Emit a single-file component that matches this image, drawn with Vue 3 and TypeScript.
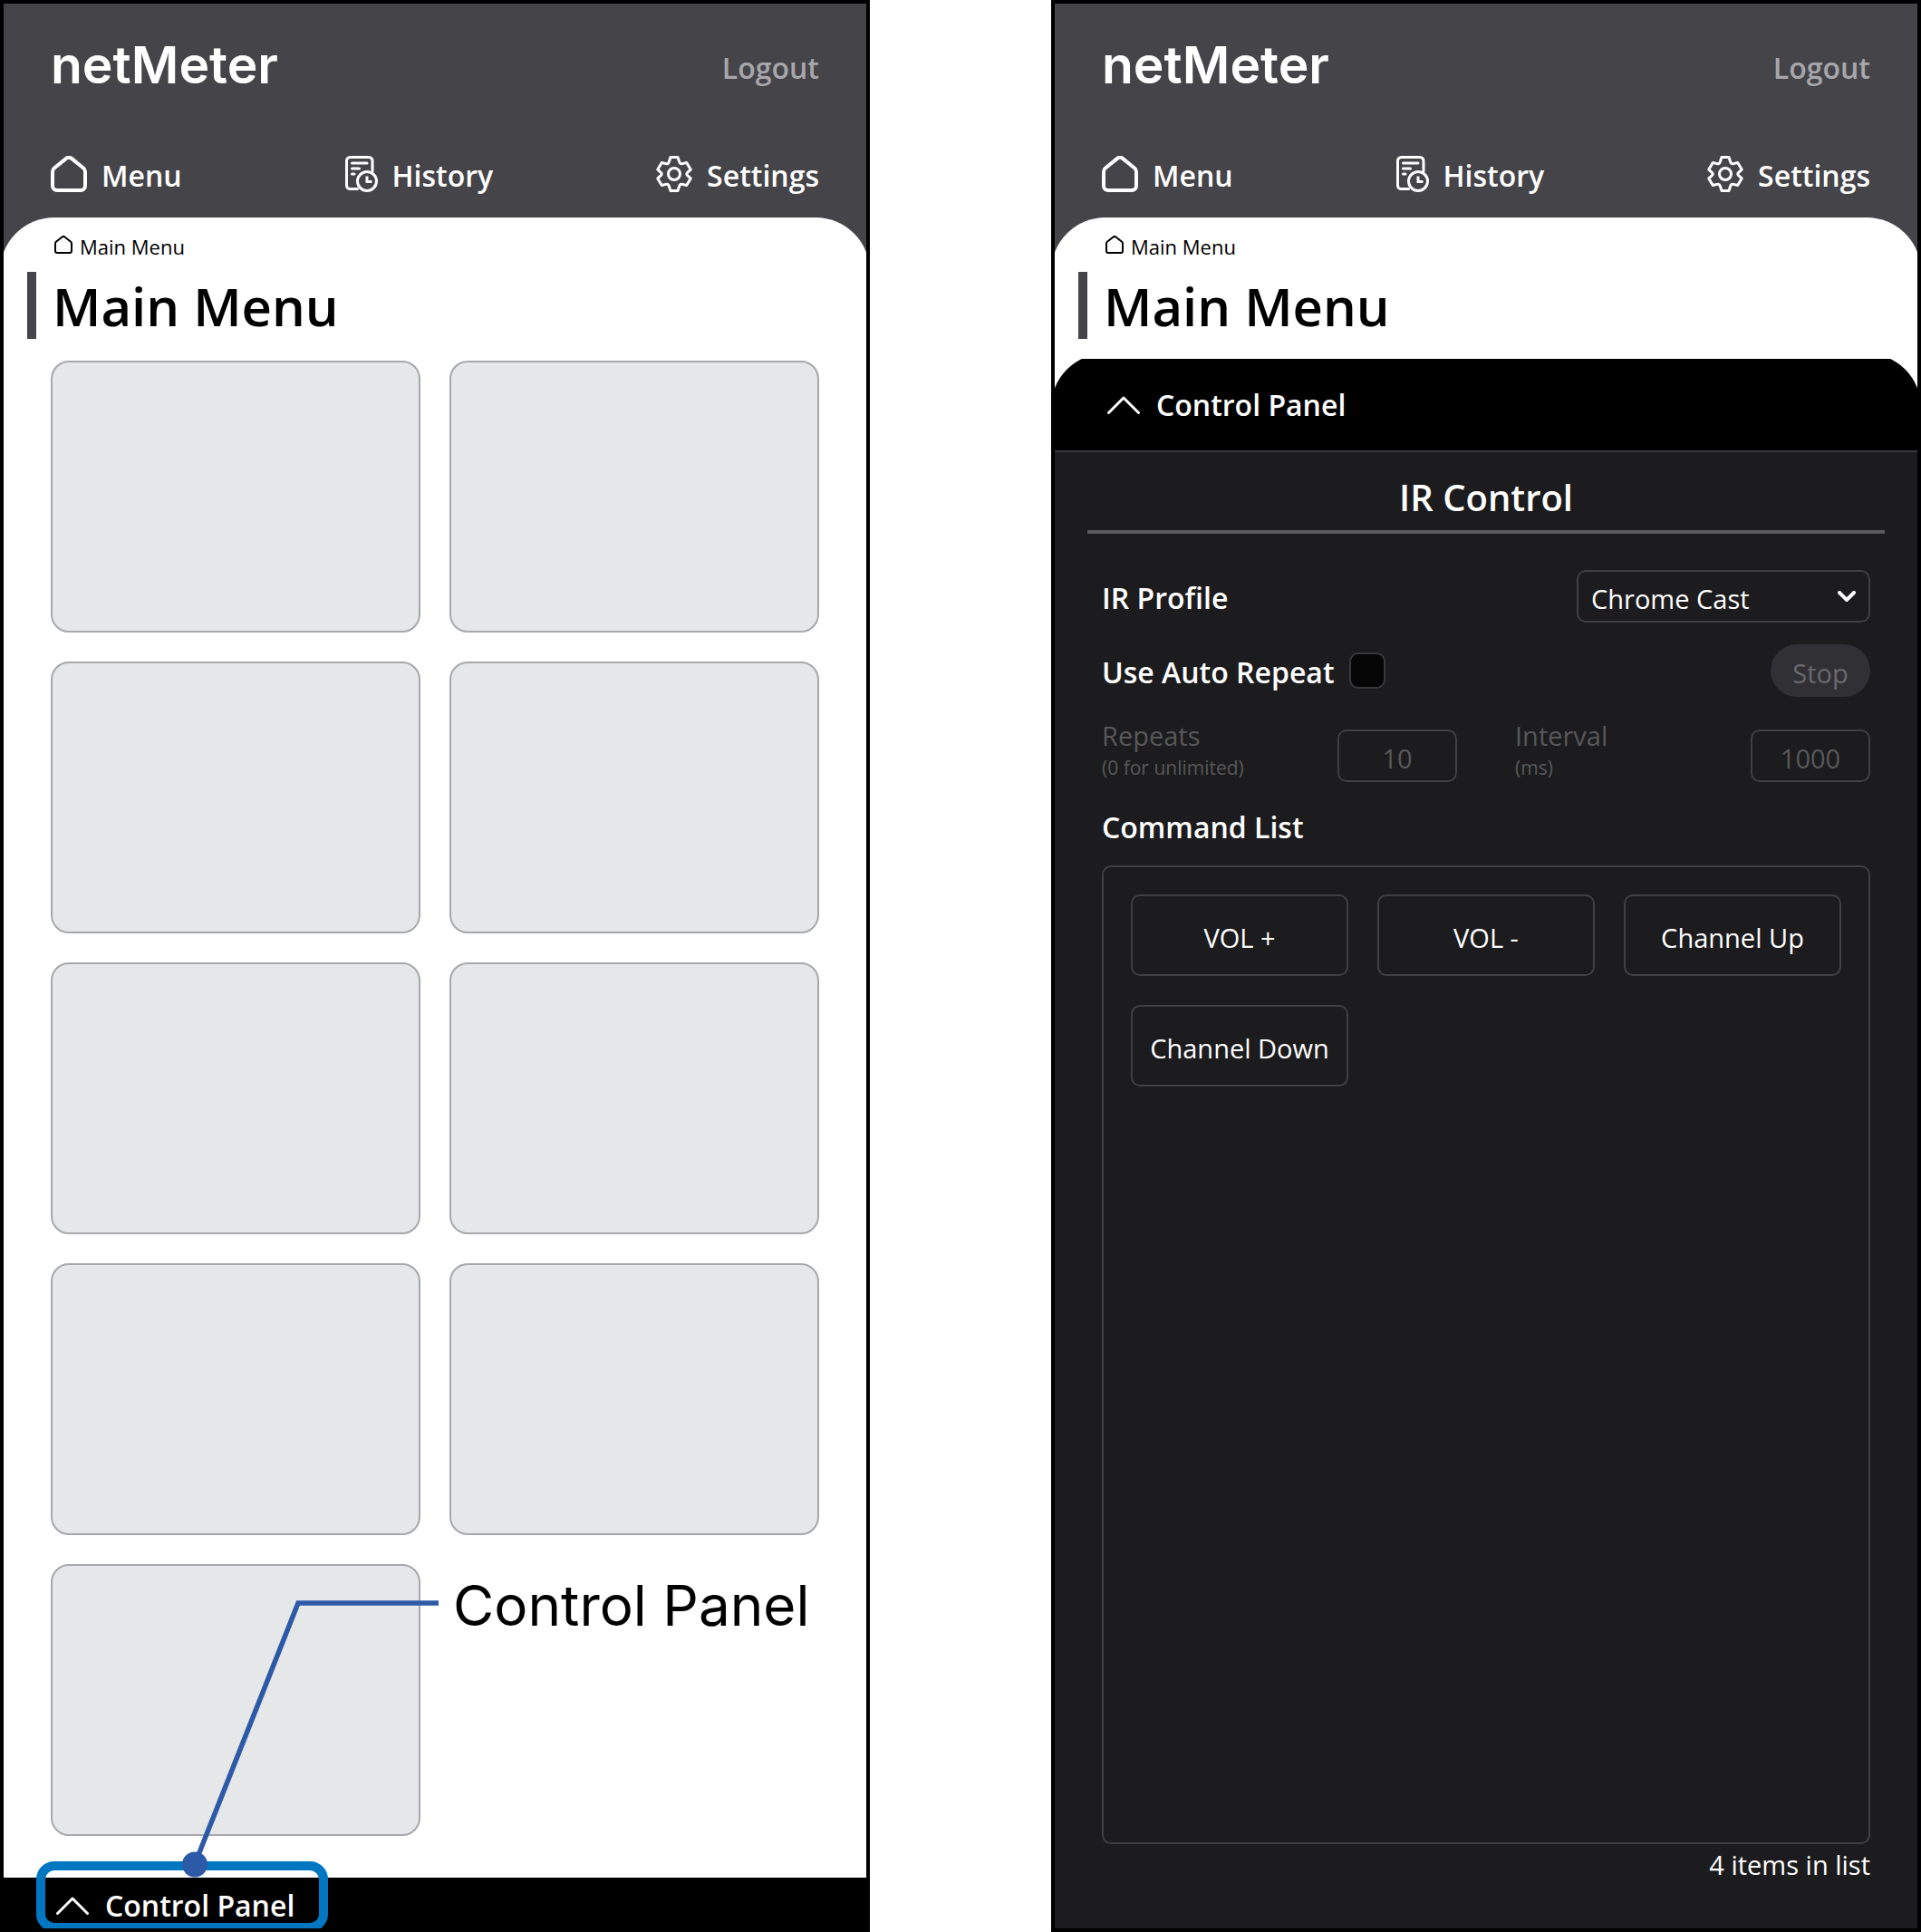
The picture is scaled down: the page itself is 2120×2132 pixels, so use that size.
<script setup lang="ts">
import { ref } from 'vue'

interface Command {
  id: number
  label: string
}

const cardCount = 9
const profiles: string[] = ['Chrome Cast']
const profile = ref<string>('Chrome Cast')
const autoRepeat = ref<boolean>(false)
const repeats = ref<string>('10')
const interval = ref<string>('1000')
const commands: Command[] = [
  { id: 1, label: 'VOL +' },
  { id: 2, label: 'VOL -' },
  { id: 3, label: 'Channel Up' },
  { id: 4, label: 'Channel Down' },
]
const screens = ['menu', 'control'] as const
</script>

<template>
  <div class="stage">
    <section v-for="screen in screens" :key="screen" class="phone">
      <header class="header">
        <div class="brand-row">
          <span class="brand">netMeter</span>
          <a class="logout" href="#">Logout</a>
        </div>
        <nav class="nav">
          <a class="nav-link" href="#">
            <svg width="40" height="40" viewBox="0 0 40 40" fill="none" stroke="currentColor" stroke-width="4" stroke-linejoin="round">
              <path d="M2 17.500c0-1.600.7-3 1.900-4L17 2.900c1.800-1.400 4.200-1.400 6 0l13.100 10.600c1.200 1 1.900 2.400 1.900 4V33c0 2.800-2.200 5-5 5H7c-2.800 0-5-2.200-5-5z" />
            </svg>
            Menu
          </a>
          <a class="nav-link" href="#">
            <svg width="36" height="40" viewBox="0 0 36 40" fill="none" stroke="currentColor" stroke-width="3" stroke-linecap="round">
              <path d="M13.500 36.500H5.500a4 4 0 0 1-4-4v-27a4 4 0 0 1 4-4h20.500a4 4 0 0 1 4 4V17" />
              <path d="M7.500 8h16.500M7.500 14h8M7.500 20h2.500" />
              <circle cx="24" cy="28" r="10.500" />
              <path d="M24 24v4.500h4" stroke-linecap="square" />
            </svg>
            History
          </a>
          <a class="nav-link" href="#">
            <svg width="40" height="40" viewBox="0 0 40 40" fill="none" stroke="currentColor" stroke-width="3" stroke-linejoin="round">
              <path d="M16 1.500h8l1.700 5.200c.5 1.400 2 2.300 3.500 1.900l4.500-1.100 4.500 7.600-3.500 3.200c-1.200 1-1.200 2.400 0 3.400l3.500 3.200-4.500 7.600-4.500-1.100c-1.500-.4-3 .5-3.500 1.900L24 38.500h-8l-1.700-5.200c-.5-1.400-2-2.300-3.500-1.900l-4.500 1.100-4.500-7.600 3.500-3.200c1.200-1 1.200-2.400 0-3.400l-3.500-3.200 4.500-7.600 4.500 1.100c1.500.4 3-.5 3.500-1.900z" />
              <circle cx="20" cy="20" r="6.500" />
            </svg>
            Settings
          </a>
        </nav>
      </header>

      <main class="sheet">
        <div class="crumbs">
          <svg width="20" height="20" viewBox="0 0 20 20" fill="none" stroke="currentColor" stroke-width="2" stroke-linejoin="round">
            <path d="M1 8.700c0-.8.300-1.500.9-2L8.600 1.500c.8-.7 2-.7 2.800 0l6.700 5.200c.6.5.9 1.200.9 2V17c0 1.100-.9 2-2 2H3c-1.100 0-2-.9-2-2z" />
          </svg>
          <a class="crumb" href="#">Main Menu</a>
        </div>
        <h1 class="title">Main Menu</h1>

        <template v-if="screen === 'menu'">
          <div class="cards">
            <div v-for="n in cardCount" :key="n" class="card"></div>
            <div class="callout-label">Control Panel</div>
          </div>
          <button class="panel-toggle docked" type="button">
            <svg width="36" height="20" viewBox="0 0 36 20" fill="none" stroke="currentColor" stroke-width="3" stroke-linecap="round" stroke-linejoin="round">
              <path d="M1.500 18.500 18 2l16.500 16.500" />
            </svg>
            Control Panel
          </button>
        </template>

        <div v-else class="panel">
          <div class="panel-head">
            <button class="panel-toggle raised" type="button">
              <svg width="36" height="20" viewBox="0 0 36 20" fill="none" stroke="currentColor" stroke-width="3" stroke-linecap="round" stroke-linejoin="round">
                <path d="M1.500 18.500 18 2l16.500 16.500" />
              </svg>
              Control Panel
            </button>
          </div>
          <h2 class="panel-title">IR Control</h2>
          <div class="panel-body">
            <div class="row">
              <label class="label" for="profile">IR Profile</label>
              <div class="select-wrap">
                <select id="profile" v-model="profile" class="select">
                  <option v-for="p in profiles" :key="p" :value="p">{{ p }}</option>
                </select>
                <svg class="select-arrow" width="20" height="12" viewBox="0 0 20 12" fill="none" stroke="#fff" stroke-width="4" stroke-linecap="round">
                  <path d="M2 2l8 8 8-8" />
                </svg>
              </div>
            </div>
            <div class="row">
              <label class="check-label">
                <span class="label">Use Auto Repeat</span>
                <input v-model="autoRepeat" class="check" type="checkbox" />
              </label>
              <button class="stop" type="button" disabled>Stop</button>
            </div>
            <div class="numbers">
              <div class="number">
                <label class="number-label" for="repeats">Repeats<small>(0 for unlimited)</small></label>
                <input id="repeats" v-model="repeats" class="number-input" type="text" inputmode="numeric" disabled />
              </div>
              <div class="number">
                <label class="number-label" for="interval">Interval<small>(ms)</small></label>
                <input id="interval" v-model="interval" class="number-input" type="text" inputmode="numeric" disabled />
              </div>
            </div>
            <h3 class="list-title">Command List</h3>
            <div class="commands">
              <button v-for="c in commands" :key="c.id" class="command" type="button">{{ c.label }}</button>
            </div>
            <p class="count">{{ commands.length }} items in list</p>
          </div>
        </div>
      </main>

      <svg v-if="screen === 'menu'" class="callout" width="500" height="370" viewBox="0 0 500 370" fill="none" aria-hidden="true">
        <rect x="41" y="301" width="312" height="68" rx="15" stroke="#0077c0" stroke-width="10" />
        <path d="M480 11H325L211 299" stroke="#2d5aa7" stroke-width="5.500" />
        <circle cx="211" cy="299.500" r="14" fill="#2d5aa7" />
      </svg>
    </section>
  </div>
</template>

<style>
body {
  margin: 0;
  background: #fff;
}
</style>

<style scoped>
* {
  box-sizing: border-box;
}

.stage {
  display: flex;
  gap: 200px;
  min-height: 100vh;
  font-family: 'Open Sans', 'Noto Sans', sans-serif;
}

.phone {
  position: relative;
  flex: 1 1 0;
  min-width: 0;
  display: flex;
  flex-direction: column;
  border: 4px solid #000;
  background: #454449;
  overflow: hidden;
}

a {
  color: inherit;
  text-decoration: none;
}

button,
input,
select {
  font: inherit;
}

.header {
  padding: 38px 52px 28px;
  color: #fff;
}

.brand-row,
.nav,
.row {
  display: flex;
  align-items: center;
  justify-content: space-between;
}

.brand-row {
  height: 60px;
  margin-bottom: 70px;
}

.brand {
  font-family: Inter, sans-serif;
  font-size: 57px;
  font-weight: 600;
  line-height: 60px;
}

.logout {
  padding-top: 4px;
  font-size: 32px;
  font-weight: 600;
  color: #a7a7ab;
}

.nav {
  height: 40px;
}

.nav-link {
  display: flex;
  align-items: flex-start;
  gap: 16px;
  height: 40px;
  font-size: 32px;
  font-weight: 600;
  line-height: 44px;
}

.sheet {
  flex: 1;
  display: flex;
  flex-direction: column;
  margin: 0 -4px;
  padding: 14px 4px 0;
  border-radius: 60px 60px 0 0;
  background: #fff;
  color: #000;
}

.crumbs {
  display: flex;
  align-items: center;
  gap: 8px;
  height: 32px;
  padding-left: 56px;
  font-size: 22px;
  line-height: 32px;
}

.crumb {
  padding-top: 4px;
}

.title {
  margin: 14px 26px 0;
  padding: 2px 0 0 18px;
  border-left: 10px solid #454449;
  font-size: 58px;
  font-weight: 600;
  line-height: 72px;
}

.cards {
  flex: 1;
  display: grid;
  grid-template-columns: 1fr 1fr;
  grid-auto-rows: 300px;
  gap: 32px;
  padding: 24px 52px 46px;
}

.card {
  border: 2px solid #a7a8ab;
  border-radius: 20px;
  background: #e6e7e8;
}

.callout-label {
  padding: 6px 0 0 4px;
  font-family: Inter, sans-serif;
  font-size: 62px;
  line-height: 80px;
  white-space: nowrap;
}

.callout {
  position: absolute;
  left: 0;
  bottom: 0;
  pointer-events: none;
}

.panel-toggle {
  display: flex;
  align-items: center;
  gap: 18px;
  border: 0;
  background: #000;
  color: #fff;
  font-size: 32px;
  font-weight: 600;
  line-height: 40px;
}

.docked {
  height: 56px;
  padding: 6px 58px 0;
}

.panel {
  flex: 1;
  display: flex;
  flex-direction: column;
  margin-top: 22px;
}

.panel-head {
  display: flex;
  margin: 0 -4px;
  border-bottom: 2px solid #3a3a3b;
  overflow: hidden;
}

.raised {
  flex: 1;
  height: 107px;
  margin-top: -6px;
  padding: 6px 62px 0;
  border-radius: 60px 60px 0 0;
}

.panel-title {
  margin: 0;
  padding: 18px 0 8px;
  background:
    linear-gradient(#595959, #595959) center bottom / calc(100% - 72px) 4px no-repeat,
    #1c1c1e;
  color: #fff;
  font-size: 40px;
  font-weight: 600;
  line-height: 64px;
  text-align: center;
}

.panel-body {
  flex: 1;
  display: flex;
  flex-direction: column;
  padding: 40px 52px 47px;
  background: #1c1c1e;
  color: #fff;
}

.row {
  height: 58px;
  margin-bottom: 24px;
}

.label,
.list-title {
  font-size: 32px;
  font-weight: 600;
  line-height: 46px;
}

.label {
  padding-top: 4px;
}

.select-wrap {
  position: relative;
  width: 324px;
}

.select {
  width: 100%;
  height: 58px;
  padding: 4px 48px 0 14px;
  appearance: none;
  border: 2px solid #404042;
  border-radius: 10px;
  background: transparent;
  color: #fff;
  font-size: 29px;
}

.select-arrow {
  position: absolute;
  right: 16px;
  top: 23px;
  pointer-events: none;
}

.check-label {
  display: flex;
  align-items: center;
  gap: 16px;
}

.check {
  width: 40px;
  height: 40px;
  margin: 0;
  appearance: none;
  border: 2px solid #38383a;
  border-radius: 10px;
  background: #050505;
}

.stop {
  width: 110px;
  height: 58px;
  padding: 4px 0 0;
  border: 0;
  border-radius: 29px;
  background: #313035;
  color: #6a696d;
  font-size: 29px;
}

.numbers {
  display: grid;
  grid-template-columns: 1fr 1fr;
  gap: 64px;
}

.number {
  display: flex;
  align-items: flex-end;
  justify-content: space-between;
  color: #58585a;
}

.number-label {
  display: flex;
  flex-direction: column;
  font-size: 29px;
  line-height: 38px;
}

.number-label small {
  font-size: 21px;
  line-height: 32px;
}

.number-input {
  width: 132px;
  height: 58px;
  padding: 4px 0 0;
  border: 2px solid #404042;
  border-radius: 10px;
  background: transparent;
  color: #58585a;
  font-size: 29px;
  text-align: center;
}

.list-title {
  margin: 27px 0 19px;
}

.commands {
  flex: 1;
  display: grid;
  grid-template-columns: repeat(3, 1fr);
  grid-auto-rows: 90px;
  align-content: start;
  gap: 32px;
  padding: 30px;
  border: 2px solid #404042;
  border-radius: 10px;
}

.command {
  padding: 4px 0 0;
  border: 2px solid #404042;
  border-radius: 10px;
  background: transparent;
  color: #fff;
  font-size: 29px;
  white-space: nowrap;
}

.count {
  margin: 0;
  font-size: 29px;
  line-height: 46px;
  text-align: right;
}
</style>
